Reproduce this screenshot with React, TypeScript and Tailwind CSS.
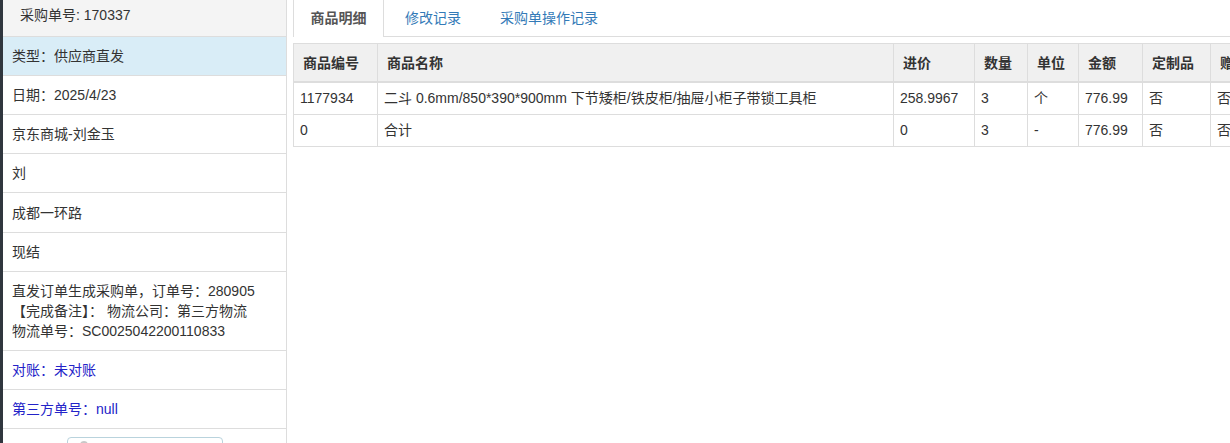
const font = { fontFamily: '"Liberation Sans", "Noto Sans CJK SC", sans-serif' };

type Row = { text: string[]; tone?: "head" | "info" | "link"; tall?: boolean };

const sideRows: Row[] = [
  { text: ["采购单号: 170337"], tone: "head" },
  { text: ["类型：供应商直发"], tone: "info" },
  { text: ["日期：2025/4/23"] },
  { text: ["京东商城-刘金玉"] },
  { text: ["刘"] },
  { text: ["成都一环路"], tall: true },
  { text: ["现结"] },
  {
    text: [
      "直发订单生成采购单，订单号：280905",
      "【完成备注】： 物流公司：第三方物流",
      "物流单号：SC0025042200110833",
    ],
  },
  { text: ["对账：未对账"], tone: "link" },
  { text: ["第三方单号：null"], tone: "link" },
];

const columns = [
  { label: "商品编号", w: "w-[84px]" },
  { label: "商品名称", w: "w-[516px]" },
  { label: "进价", w: "w-[81px]" },
  { label: "数量", w: "w-[53px]" },
  { label: "单位", w: "w-[51px]" },
  { label: "金额", w: "w-[64px]" },
  { label: "定制品", w: "w-[68px]" },
  { label: "赠品", w: "w-[60px]" },
];

const items = [
  ["1177934", "二斗 0.6mm/850*390*900mm 下节矮柜/铁皮柜/抽屉小柜子带锁工具柜", "258.9967", "3", "个", "776.99", "否", "否"],
  ["0", "合计", "0", "3", "-", "776.99", "否", "否"],
];

function SideRow({ row }: { row: Row }) {
  const base = "border-b border-[#dddddd] leading-[20px]";
  if (row.tone === "head") {
    return (
      <div className={`${base} h-[37px] bg-[#f4f4f4] pl-[17px] pt-[5px] text-[#333]`}>
        {row.text[0]}
      </div>
    );
  }
  const bg = row.tone === "info" ? "bg-[#d9edf7]" : "bg-white";
  const color = row.tone === "link" ? "text-[#2323c8]" : "text-[#333]";
  const pad = row.tall ? "pt-[10px] pb-[9px]" : "py-[9px]";
  return (
    <div className={`${base} ${bg} ${color} ${pad} pl-[9px]`}>
      {row.text.map((t) => (
        <div key={t}>{t}</div>
      ))}
    </div>
  );
}

export default function App() {
  return (
    <div className="flex h-[443px] overflow-hidden bg-white text-[14px]" style={font}>
      <div className="w-[3px] shrink-0 bg-[#30363e]" />

      <aside className="w-[284px] shrink-0 border-r border-[#dddddd]">
        {sideRows.map((r, i) => (
          <SideRow key={i} row={r} />
        ))}
        <div className="pl-[64px] pt-[8px]">
          <button
            type="button"
            className="flex h-[34px] w-[156px] items-start rounded-[4px] border border-[#b9d3dd] bg-white pl-[12px] pt-[3px]"
          >
            <span className="h-[8px] w-[8px] rounded-full bg-[#c8c8c8]" />
          </button>
        </div>
      </aside>

      <main className="min-w-0 flex-1 overflow-hidden pl-[6px]">
        <nav className="flex h-[37px] items-stretch">
          <div className="flex w-[91px] items-center justify-center border-x border-[#dddddd] bg-white font-bold text-[#555]">
            商品明细
          </div>
          <div className="w-[2px] border-b border-[#dddddd]" />
          <div className="flex w-[94px] items-center justify-center border-b border-[#dddddd] text-[#337ab7]">
            修改记录
          </div>
          <div className="flex w-[138px] items-center justify-center border-b border-[#dddddd] text-[#337ab7]">
            采购单操作记录
          </div>
          <div className="flex-1 border-b border-[#dddddd]" />
        </nav>

        <table className="mt-[6px] w-[977px] max-w-none table-fixed border-collapse text-[#333]">
          <colgroup>
            {columns.map((c) => (
              <col key={c.label} className={c.w} />
            ))}
          </colgroup>
          <thead>
            <tr className="bg-[#f0f0f0]">
              {columns.map((c) => (
                <th
                  key={c.label}
                  className="whitespace-nowrap border border-b-2 border-[#dddddd] pb-[8px] pl-[9px] pt-[9px] text-left font-bold leading-[20px]"
                >
                  {c.label}
                </th>
              ))}
            </tr>
          </thead>
          <tbody>
            {items.map((row, i) => (
              <tr key={i}>
                {row.map((cell, j) => (
                  <td
                    key={j}
                    className="whitespace-nowrap border border-[#dddddd] py-[6px] pl-[6px] leading-[19px]"
                  >
                    {cell}
                  </td>
                ))}
              </tr>
            ))}
          </tbody>
        </table>
      </main>
    </div>
  );
}
